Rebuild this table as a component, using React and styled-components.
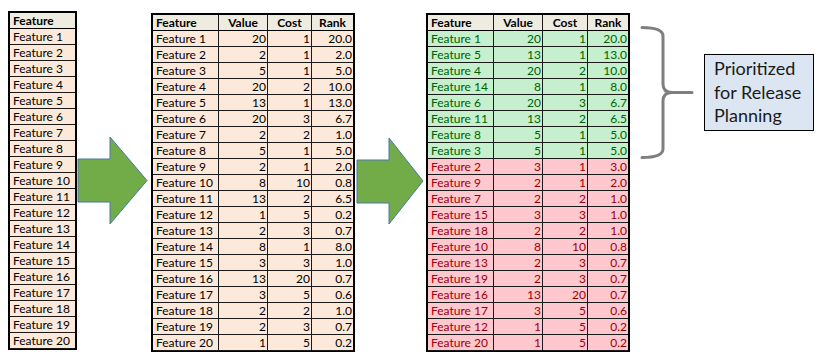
import React from "react";
import styled, { createGlobalStyle } from "styled-components";

const GlobalStyle = createGlobalStyle`
  html, body {
    margin: 0;
    padding: 0;
    background: #ffffff;
  }
  body {
    font-family: Lato, "Open Sans", sans-serif;
  }
`;

const row = ([n, value, cost, rank]) => ({ name: `Feature ${n}`, value, cost, rank });

const features = [
  [1, 20, 1, "20.0"], [2, 2, 1, "2.0"], [3, 5, 1, "5.0"], [4, 20, 2, "10.0"],
  [5, 13, 1, "13.0"], [6, 20, 3, "6.7"], [7, 2, 2, "1.0"], [8, 5, 1, "5.0"],
  [9, 2, 1, "2.0"], [10, 8, 10, "0.8"], [11, 13, 2, "6.5"], [12, 1, 5, "0.2"],
  [13, 2, 3, "0.7"], [14, 8, 1, "8.0"], [15, 3, 3, "1.0"], [16, 13, 20, "0.7"],
  [17, 3, 5, "0.6"], [18, 2, 2, "1.0"], [19, 2, 3, "0.7"], [20, 1, 5, "0.2"],
].map(row);

const ranked = [
  [1, 20, 1, "20.0"], [5, 13, 1, "13.0"], [4, 20, 2, "10.0"], [14, 8, 1, "8.0"],
  [6, 20, 3, "6.7"], [11, 13, 2, "6.5"], [8, 5, 1, "5.0"], [3, 5, 1, "5.0"],
  [2, 3, 1, "3.0"], [9, 2, 1, "2.0"], [7, 2, 2, "1.0"], [15, 3, 3, "1.0"],
  [18, 2, 2, "1.0"], [10, 8, 10, "0.8"], [13, 2, 3, "0.7"], [19, 2, 3, "0.7"],
  [16, 13, 20, "0.7"], [17, 3, 5, "0.6"], [12, 1, 5, "0.2"], [20, 1, 5, "0.2"],
].map(row);

const Page = styled.div`
  display: flex;
  align-items: flex-start;
  width: 827px;
  height: 358px;
  padding-left: 8px;
  box-sizing: border-box;
  overflow: hidden;
`;

const Sheet = styled.div`
  display: grid;
  grid-template-columns: ${(p) => p.$cols};
  grid-auto-rows: 16px;
  margin-top: ${(p) => p.$top}px;
  border: 2px solid #000;
  border-bottom-width: 1px;
  background: #000;
`;

const Cell = styled.div`
  box-sizing: border-box;
  height: 16px;
  padding: 0 ${(p) => (p.$num ? "1px" : "3px")};
  border-right: ${(p) => (p.$last ? "0" : "1px solid #1a1a1a")};
  border-bottom: 1px solid #1a1a1a;
  font-size: 12px;
  line-height: 15px;
  white-space: nowrap;
  overflow: hidden;
  text-align: ${(p) => (p.$num ? "right" : "left")};
  background: ${(p) => p.$bg};
  color: ${(p) => p.$fg};
`;

const Head = styled(Cell)`
  font-weight: 700;
  color: #000;
  background: #eeece1;
  text-align: ${(p) => (p.$center ? "center" : "left")};
  border-bottom: 1.5px solid #000;
`;

const Arrow = styled.svg`
  flex: none;
  display: block;
`;

const Callout = styled.div`
  display: flex;
  align-items: flex-start;
`;

const Label = styled.div`
  box-sizing: border-box;
  width: 110px;
  height: 77px;
  margin-top: 54px;
  padding: 2px 0 0 9px;
  background: #dce6f2;
  border: 1px solid #000;
  font-size: 18px;
  line-height: 23.5px;
  color: #1a1a1a;
`;

const PEACH = { bg: "#fde9d9", fg: "#000" };
const GOOD = { bg: "#c6efce", fg: "#006100" };
const BAD = { bg: "#ffc7ce", fg: "#9c0006" };

const FeatureList = () => (
  <Sheet $cols="65px" $top={11}>
    <Head $last>Feature</Head>
    {features.map((f) => (
      <Cell key={f.name} $last $bg={PEACH.bg} $fg={PEACH.fg}>
        {f.name}
      </Cell>
    ))}
  </Sheet>
);

const ScoreTable = ({ rows, cols, tone }) => (
  <Sheet $cols={cols} $top={13}>
    <Head>Feature</Head>
    <Head $center>Value</Head>
    <Head $center>Cost</Head>
    <Head $center $last>Rank</Head>
    {rows.map((f, i) => {
      const t = tone(i);
      return (
        <React.Fragment key={f.name}>
          <Cell $bg={t.bg} $fg={t.fg}>{f.name}</Cell>
          <Cell $num $bg={t.bg} $fg={t.fg}>{f.value}</Cell>
          <Cell $num $bg={t.bg} $fg={t.fg}>{f.cost}</Cell>
          <Cell $num $last $bg={t.bg} $fg={t.fg}>{f.rank}</Cell>
        </React.Fragment>
      );
    })}
  </Sheet>
);

const BlockArrow = ({ width, body, head, tip }) => (
  <Arrow width={width} height="358" viewBox={`0 0 ${width} 358`}>
    <polygon
      points={`${body[0]},${body[1]} ${head[0]},${body[1]} ${head[0]},${head[1]} ${tip[0]},${tip[1]} ${head[0]},${head[2]} ${head[0]},${body[2]} ${body[0]},${body[2]}`}
      fill="#71ac48"
      stroke="#4a77a8"
      strokeWidth="1"
    />
  </Arrow>
);

const Brace = () => (
  <Arrow width="74" height="170" viewBox="0 0 74 170">
    <path
      d="M12 27.5 Q33 27.5 33 36 L33 84 Q33 92.5 42 92.5 L62 92.5 M42 92.5 Q33 92.5 33 101 L33 149 Q33 157.5 12 157.5"
      fill="none"
      stroke="#7f7f7f"
      strokeWidth="3"
      strokeLinecap="round"
      strokeLinejoin="round"
    />
  </Arrow>
);

export default function App() {
  return (
    <>
      <GlobalStyle />
      <Page>
        <FeatureList />
        <BlockArrow width={74} body={[1, 159, 202]} head={[33, 137, 224]} tip={[70, 180.5]} />
        <ScoreTable rows={features} cols="66px 49px 44px 41px" tone={() => PEACH} />
        <BlockArrow width={71} body={[2, 160, 203]} head={[34, 138, 224]} tip={[68, 181]} />
        <ScoreTable
          rows={ranked}
          cols="66px 49px 45px 40px"
          tone={(i) => (i < 8 ? GOOD : BAD)}
        />
        <Callout>
          <Brace />
          <Label>
            Prioritized
            <br />
            for Release
            <br />
            Planning
          </Label>
        </Callout>
      </Page>
    </>
  );
}
